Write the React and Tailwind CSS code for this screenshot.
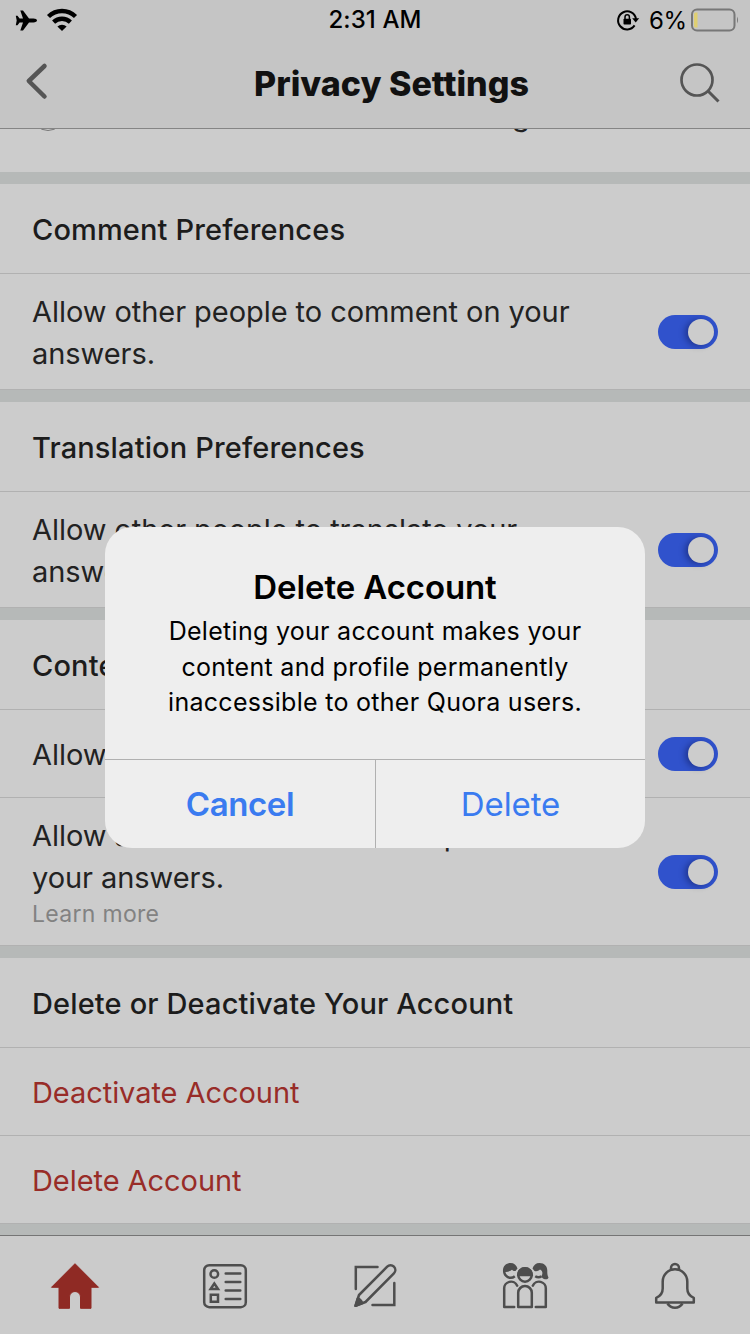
import React from "react";

function Toggle() {
  return (
    <div className="flex h-[34px] w-[60px] shrink-0 items-center justify-end rounded-full bg-[#3052cc] pr-1">
      <div className="size-[26px] rounded-full bg-[#cccccc] shadow-[-3px_1px_6px_rgba(0,0,40,0.35)]" />
    </div>
  );
}

function Heading({ children }) {
  return (
    <div className="flex h-[90px] items-center border-b border-[#b1b1b1] px-8 pt-[3px]">
      <h2 className="whitespace-nowrap text-[29px] font-medium tracking-[0.14px] text-[#1c1c1c]">{children}</h2>
    </div>
  );
}

function Row({ height, children }) {
  return (
    <div className={"flex items-center justify-between border-b border-[#b1b1b1] px-8 " + height}>
      {children}
      <Toggle />
    </div>
  );
}

function Gap() {
  return <div className="h-3 shrink-0 bg-[#b6b9b8]" />;
}

function RowText({ children }) {
  return <p className="whitespace-nowrap pt-[3px] text-[29px] leading-[42px] tracking-[-0.06px] text-[#222222]">{children}</p>;
}

function LinkRow({ children }) {
  return (
    <div className="flex h-[88px] items-center border-b border-[#b1b1b1] px-8 pt-[2px] text-[29px] tracking-[-0.06px] text-[#982c28]">
      {children}
    </div>
  );
}

function StatusBar() {
  return (
    <div className="grid h-10 grid-cols-3 items-center text-black">
      <div className="flex items-center gap-2 pl-[15px]">
        <svg className="size-[23px]" viewBox="0 0 23 23">
          <path d="M22 11.5c0-1.100-1.500-1.900-3.500-1.900h-4.500L8 1.600H5.300l2.700 8H4.600L2.500 6.700H.8l.9 4.800-.9 4.800h1.700l2.100-2.900H8l-2.700 8H8l6-8h4.500c2 0 3.500-.8 3.500-1.900z" />
        </svg>
        <svg className="h-6 w-8" viewBox="0 1 32 24" fill="none" stroke="black" strokeWidth="4.400">
          <path d="M2.500 9.500a19.500 19.500 0 0 1 27 0" />
          <path d="M7.600 15.100a12.200 12.200 0 0 1 16.800 0" />
          <path d="M16 24l-4.600-4.500a6.600 6.600 0 0 1 9.200 0z" fill="black" stroke="none" />
        </svg>
      </div>
      <div className="text-center text-[24px] font-medium leading-10 tracking-[0.1px]">2:31 AM</div>
      <div className="flex items-center justify-end pr-[10px]">
        <svg className="h-[22px] w-[24px]" viewBox="0 0 24 22" fill="none" stroke="black" strokeWidth="2">
          <path d="M18.6 16.4A9 9 0 1 1 20 10" />
          <path d="M16.2 9.3h7l-3.5 4.2z" fill="black" stroke="none" />
          <rect x="7.5" y="9.8" width="7.5" height="5.7" rx=".8" fill="black" stroke="none" />
          <path d="M9 10V8a2.2 2.2 0 0 1 4.4 0v2" strokeWidth="1.5" />
        </svg>
        <span className="ml-[9px] pt-px text-[24px] leading-[39px] tracking-[-0.2px]">6%</span>
        <svg className="ml-[3px] h-6 w-[50px]" viewBox="0 0 50 24">
          <rect x="2" y="1.5" width="42.5" height="21" rx="5" fill="none" stroke="#777777" strokeWidth="2" />
          <path d="M5.500 4.500h2v15h-2a1.500 1.500 0 0 1-1.500-1.500v-12a1.500 1.500 0 0 1 1.500-1.500z" fill="#dfcf72" />
          <path d="M47 8.500q2 3.500 0 7z" fill="#777777" />
        </svg>
      </div>
    </div>
  );
}

function NavBar() {
  return (
    <div className="flex h-[88px] items-center justify-between pb-1 pl-6 pr-[29px]">
      <svg className="h-10 w-[26px]" viewBox="0 0 26 40" fill="none" stroke="#555555" strokeWidth="4.500" strokeLinecap="round" strokeLinejoin="round">
        <path d="M20.500 4L4.800 19l15.700 15.500" />
      </svg>
      <h1 className="ml-[54px] pt-[3px] text-[34px] font-extrabold leading-10 text-[#111111]">Privacy Settings</h1>
      <svg className="size-[42px]" viewBox="0 -1 42 42" fill="none" stroke="#555555" strokeWidth="2.700">
        <circle cx="18" cy="18" r="15.500" />
        <path d="M29 29l10.500 10.500" strokeWidth="3" />
      </svg>
    </div>
  );
}

function TabBar() {
  const line = { className: "size-[50px]", viewBox: "0 0 50 50", fill: "none", stroke: "#4e4e4e", strokeWidth: 2.5 };
  return (
    <nav className="grid h-[99px] grid-cols-5 items-center justify-items-center border-t border-[#757575] bg-[#cbcbcb] pt-[2px]">
      <svg className="size-[50px]" viewBox="0 0 50 50" fill="#8f2a24" stroke="#8f2a24" strokeLinejoin="round">
        <path d="M25 2.700L48.500 26.300H41v21H30.500V36a5.500 5.500 0 0 0-11 0v11.300H9v-21H1.500z" />
      </svg>
      <svg {...line}>
        <rect x="4.200" y="4.200" width="41.600" height="42" rx="5" />
        <circle cx="14.300" cy="13" r="3.800" />
        <path d="M14.300 22.500l3.700 5.500h-7.400zM10.800 33.700h7.200v7h-7.200z" />
        <path d="M25.700 12.500h14.600M25.700 21h14.600M25.700 29.500h14.600M25.700 38h14.600" strokeLinecap="round" />
      </svg>
      <svg {...line} strokeLinecap="round">
        <path d="M27.500 6H5.800v22" />
        <path d="M22.500 44H44.300V22" />
        <path d="M5.500 44.800L9 34 37.200 5.700a4.700 4.700 0 0 1 6.700 6.700L15.500 41z" strokeLinejoin="round" />
        <path d="M5.500 44.800l2.300-7.300q3 1 4.500 4.700z" fill="#4e4e4e" strokeLinejoin="round" />
      </svg>
      <svg {...line}>
        <circle cx="25" cy="14" r="6.700" />
        <path d="M18.200 14a6.800 6.800 0 0 1 13.600 0z" fill="#4e4e4e" />
        <path d="M18.200 46V31.800a6.800 6.800 0 0 1 13.600 0V46z" strokeLinejoin="round" />
        <path d="M14.200 46H4.200V28a6.800 6.800 0 0 1 13-3.300M35.800 46h10V28a6.800 6.800 0 0 0-13-3.300" strokeLinecap="round" strokeLinejoin="round" />
        <path d="M4.200 10a6.500 6.500 0 0 0 10.600 5.300M35.200 15.300a6 6 0 0 0 6.500 0" />
        <path d="M3 10.500C2.500 5.500 6 2 10.500 2c3.500 0 6 2 7 5.500L15.500 10c-1.500.3-2.700-.3-3.500-1.300C9.500 10.500 6.500 11.500 3 10.500z" fill="#4e4e4e" stroke="none" />
        <path d="M32.500 7.500C33.500 4 36 2 39.500 2c5 0 8 3.500 7.800 8-.1 3 .2 4.500 1.200 6.500-.5 2-3 2.300-5 1.200-1.500-.8-2-2-1.500-3.700 1-2.500 0-4.500-2-5.500-1.500 1.500-3.500 2-5.500 1.500z" fill="#4e4e4e" stroke="none" />
      </svg>
      <svg {...line} strokeLinejoin="round">
        <path d="M21 8.500V7a4 4 0 0 1 8 0v1.500" />
        <path d="M12.700 20.500a12.300 12.300 0 0 1 24.600 0v7c0 4.500 2 7.500 6.500 9.300v4.700H6.200v-4.700c4.500-1.800 6.500-4.800 6.500-9.300z" />
        <path d="M17.500 42.500a8.800 8.800 0 0 0 15 0" />
      </svg>
    </nav>
  );
}

function Dialog() {
  return (
    <div className="absolute inset-0 flex items-start justify-center pt-[527px]">
      <div role="alertdialog" className="flex h-[321px] w-[540px] flex-col overflow-hidden rounded-[27px] bg-[#eeeeee]">
        <div className="flex h-[233px] flex-col items-center border-b border-[#b0b0b0] pt-10 text-center text-black">
          <h2 className="text-[33px] font-semibold leading-10 tracking-[-0.1px]">Delete Account</h2>
          <p className="mt-[7px] whitespace-nowrap text-[25px] leading-[35.500px] tracking-[0.290px]">
            Deleting your account makes your<br />content and profile permanently<br />inaccessible to other Quora users.
          </p>
        </div>
        <div className="flex flex-1 text-[33px] text-[#3a7bf0]">
          <button className="w-[271px] border-r border-[#b0b0b0] pt-[2px] font-semibold tracking-[-0.4px]">Cancel</button>
          <button className="flex-1 pt-[2px] tracking-[-0.1px]">Delete</button>
        </div>
      </div>
    </div>
  );
}

export default function App() {
  return (
    <div className="relative flex h-[1334px] w-[750px] flex-col overflow-hidden bg-[#cccccc] font-['Inter','Liberation_Sans',sans-serif]">
      <header className="h-[129px] shrink-0 border-b border-[#858585] bg-[#c5c5c5]">
        <StatusBar />
        <NavBar />
      </header>
      <div className="flex h-[43px] shrink-0 items-end overflow-hidden pb-[41px] pl-8">
        <div className="size-8 shrink-0 rounded-full border border-[#777777]" />
        <span className="ml-[448px] text-[29px] leading-[31px] text-[#222222]">g</span>
      </div>
      <Gap />
      <Heading>Comment Preferences</Heading>
      <Row height="h-[116px]"><RowText>Allow other people to comment on your<br />answers.</RowText></Row>
      <Gap />
      <Heading>Translation Preferences</Heading>
      <Row height="h-[116px]"><RowText>Allow other people to translate your<br />answers.</RowText></Row>
      <Gap />
      <Heading>Content Preferences</Heading>
      <Row height="h-[88px]"><RowText>Allow</RowText></Row>
      <Row height="h-[148px]">
        <div className="pb-[2px]">
          <RowText>Allow advertisers on Quora to promote<br />your answers.</RowText>
          <p className="text-[23px] leading-[30px] tracking-[0.3px] text-[#828282]">Learn more</p>
        </div>
      </Row>
      <Gap />
      <Heading>Delete or Deactivate Your Account</Heading>
      <LinkRow>Deactivate Account</LinkRow>
      <LinkRow>Delete Account</LinkRow>
      <div className="h-[11px] shrink-0 bg-[#b6b9b8]" />
      <TabBar />
      <Dialog />
    </div>
  );
}
